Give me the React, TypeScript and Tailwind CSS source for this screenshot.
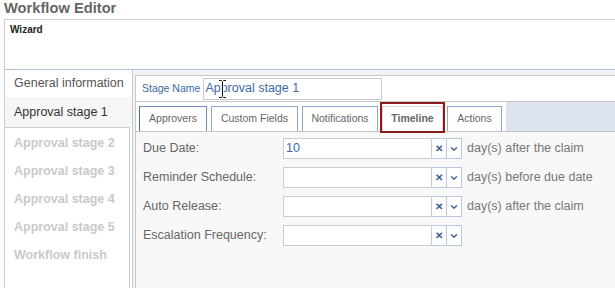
import { ChevronDown } from 'lucide-react';

const stages = ['Approval stage 2', 'Approval stage 3', 'Approval stage 4', 'Approval stage 5', 'Workflow finish'];

const tabs = [
  { label: 'Approvers', w: 'w-[68px]', active: true },
  { label: 'Custom Fields', w: 'w-[87px]' },
  { label: 'Notifications', w: 'w-[76px]' },
  { label: 'Timeline', w: 'w-[61px]', marked: true },
  { label: 'Actions', w: 'w-[55px]' },
];

const fields = [
  { label: 'Due Date:', value: '10', suffix: 'day(s) after the claim' },
  { label: 'Reminder Schedule:', value: '', suffix: 'day(s) before due date' },
  { label: 'Auto Release:', value: '', suffix: 'day(s) after the claim' },
  { label: 'Escalation Frequency:', value: '', suffix: '' },
];

function IBeam() {
  return (
    <svg className="absolute left-[14px] top-[0px]" width="9" height="20" viewBox="0 0 9 20" fill="none">
      <path d="M1 1.5H3.5L4.5 2.5L5.5 1.5H8M4.5 2.5V17.5M1 18.5H3.5L4.5 17.5L5.5 18.5H8" stroke="white" strokeWidth="2.5" />
      <path d="M1 1.5H3.5L4.5 2.5L5.5 1.5H8M4.5 2.5V17.5M1 18.5H3.5L4.5 17.5L5.5 18.5H8" stroke="#111" strokeWidth="1" />
    </svg>
  );
}

function App() {
  return (
    <div
      className="w-[615px] h-[288px] overflow-hidden bg-white"
      style={{ fontFamily: '"Liberation Sans", Arial, sans-serif' }}
    >
      {/* Title */}
      <div className="h-[19px] pl-[4px] text-[14.7px] leading-[17px] font-bold text-[#666]">Workflow Editor</div>

      <div className="ml-[4px] w-[640px] border-l border-t border-[#cccccc]">
        {/* Wizard header */}
        <div className="h-[50px] border-b border-[#aebfdc] pl-[5px] pt-[2px] text-[10px] font-bold text-[#222]">
          Wizard
        </div>

        <div className="flex h-[220px]">
          {/* Steps */}
          <div className="w-[128px] shrink-0 flex flex-col border-r border-[#cccccc]">
            <div className="h-[27px] flex items-center pl-[9px] text-[12.5px] text-[#555] bg-white">
              General information
            </div>
            <div className="h-[30px] flex items-center pl-[9px] text-[12.5px] text-[#333] bg-[#f6f6f6]">
              Approval stage 1
            </div>
            <div className="flex-1 border-t border-r border-[#cccccc] mr-[2px] pt-[1px] bg-white">
              {stages.map((s) => (
                <div key={s} className="h-[28px] flex items-center pl-[9px] text-[12.5px] font-bold text-[#c9c9c9]">
                  {s}
                </div>
              ))}
            </div>
          </div>

          {/* Stage editor */}
          <div className="flex-1 bg-[#f3f3f3] pt-[5px] pl-[2px] flex flex-col">
            <div className="flex-1 flex flex-col border-l border-t border-[#c8c8c8] bg-white">
              <div className="h-[26px] shrink-0 flex items-center border-b border-[#c8c8c8] pl-[6px]">
                <span className="text-[10.5px] text-[#3d6aa6] mr-[3px]">Stage Name</span>
                <div className="relative w-[179px] h-[22px] border border-[#cccccc] flex items-center pl-[1px] text-[12.5px] text-[#3d6aa6]">
                  Approval stage 1
                  <IBeam />
                </div>
              </div>

              {/* Tabs */}
              <div className="h-[30px] shrink-0 flex items-end gap-[4px] border-b border-[#c4c4c4] pl-[3px]">
                {tabs.map((t) => (
                  <div
                    key={t.label}
                    className={`relative ${t.w} h-[25px] flex items-center justify-center bg-white border-t border-x text-[10.5px] ${
                      t.active ? 'border-[#6f8fbf] border-l-[#4a6fa8]' : 'border-[#8ea7cc]'
                    } ${t.marked ? 'border-[#d8d8d8] font-bold text-[#666]' : 'text-[#666]'}`}
                  >
                    {t.label}
                    {t.marked && (
                      <span className="absolute -top-[5px] -left-[3px] -right-[3px] -bottom-[2px] border-2 border-[#8b1a1a]" />
                    )}
                  </div>
                ))}
                <div className="flex-1 self-stretch bg-[#dde3ed]" />
              </div>

              {/* Timeline form */}
              <div className="flex-1 bg-[#f8f8f8] pt-[6px] pl-[7px] flex flex-col gap-[8px]">
                {fields.map((f) => (
                  <div key={f.label} className="h-[21px] flex items-center">
                    <div className="w-[140px] text-[12.5px] text-[#666]">{f.label}</div>
                    <div className="w-[149px] h-[21px] bg-white border border-[#cccccc] flex items-center pl-[2px] text-[12.5px] text-[#3d6aa6]">
                      {f.value}
                    </div>
                    <div className="w-[15px] h-[21px] bg-white border-y border-r border-[#b9c8de] flex items-center justify-center text-[10px] font-bold text-[#3a5a9a]">
                      ✕
                    </div>
                    <div className="w-[15px] h-[21px] bg-white border-y border-r border-[#b9c8de] flex items-center justify-center text-[#3a5a9a]">
                      <ChevronDown size={10} strokeWidth={3} />
                    </div>
                    <span className="ml-[5px] text-[12.5px] text-[#777]">{f.suffix}</span>
                  </div>
                ))}
              </div>
            </div>
          </div>
        </div>
      </div>
    </div>
  );
}

export default App;
